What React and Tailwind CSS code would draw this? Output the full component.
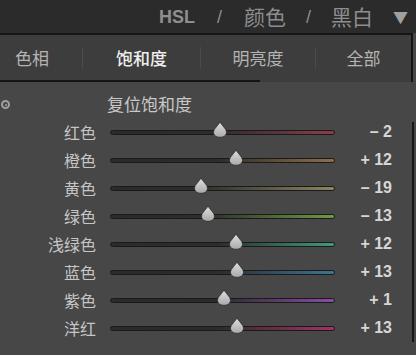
import React from 'react';

const rows = [
    { label: '红色', value: '– 2', pos: 49, track: 'bg-[linear-gradient(to_right,#2b2b2b_0%,#2e2b2c_48%,#8a3c4c_100%)]' },
    { label: '橙色', value: '+ 12', pos: 56, track: 'bg-[linear-gradient(to_right,#2b2b2b_0%,#2e2c2a_48%,#8c7048_100%)]' },
    { label: '黄色', value: '– 19', pos: 40.5, track: 'bg-[linear-gradient(to_right,#2b2b2b_0%,#2e2d2a_40%,#8a8660_100%)]' },
    { label: '绿色', value: '– 13', pos: 43.5, track: 'bg-[linear-gradient(to_right,#2b2b2b_0%,#2b2e2a_42%,#6c9c42_100%)]' },
    { label: '浅绿色', value: '+ 12', pos: 56, track: 'bg-[linear-gradient(to_right,#2b2b2b_0%,#2a2e2d_48%,#3f9a7e_100%)]' },
    { label: '蓝色', value: '+ 13', pos: 56.5, track: 'bg-[linear-gradient(to_right,#2b2b2b_0%,#2a2c2e_48%,#3c7494_100%)]' },
    { label: '紫色', value: '+ 1', pos: 50.5, track: 'bg-[linear-gradient(to_right,#2b2b2b_0%,#2d2a2e_48%,#8a4ca4_100%)]' },
    { label: '洋红', value: '+ 13', pos: 56.5, track: 'bg-[linear-gradient(to_right,#2b2b2b_0%,#2e2a2c_48%,#a23462_100%)]' },
];

const Thumb = () => (
    <svg width="14" height="17" viewBox="0 0 14 17" className="block">
        <defs>
            <linearGradient id="thumbFill" x1="0" y1="0" x2="0" y2="1">
                <stop offset="0" stopColor="#e2e2e2" />
                <stop offset="1" stopColor="#a8a8a8" />
            </linearGradient>
        </defs>
        <path
            d="M7 0.5 C8.2 4.3 13.5 7.5 13.5 11.3 C13.5 14.3 10.6 16.3 7 16.3 C3.4 16.3 0.5 14.3 0.5 11.3 C0.5 7.5 5.8 4.3 7 0.5 Z"
            fill="url(#thumbFill)"
            stroke="#2a2a2a"
            strokeWidth="0.8"
        />
    </svg>
);

const Separator = () => <div className="w-px h-[22px] bg-[#4c4c4c]" />;

export default function App() {
    return (
        <div className="w-[416px] h-[355px] overflow-hidden bg-[#474747] font-['Noto_Sans_CJK_SC','Liberation_Sans',sans-serif]">
            {/* module header */}
            <div className="h-[33px] bg-[#2b2b2b] flex items-center justify-end pr-[8px] text-[#8e8e8e] text-[21px] leading-none">
                <span className="font-['Liberation_Sans',sans-serif] font-bold text-[18px]">HSL</span>
                <span className="mx-[22px] text-[18px] font-['Liberation_Sans',sans-serif]">/</span>
                <span>颜色</span>
                <span className="mx-[20px] text-[18px] font-['Liberation_Sans',sans-serif]">/</span>
                <span>黑白</span>
                <span className="ml-[20px] text-[15px] text-[#a0a0a0]">▼</span>
            </div>

            {/* tabs */}
            <div className="h-[49px] bg-[#3d3d3d] border-t-2 border-r-2 border-[#151515] mr-[3px] relative">
                <div className="h-[46px] flex items-center text-[17px] text-[#b4b4b4]">
                    <div className="w-[82px] pl-[15px]">色相</div>
                    <Separator />
                    <div className="w-[117px] text-center text-[#eeeeee] font-medium">饱和度</div>
                    <Separator />
                    <div className="w-[114px] text-center">明亮度</div>
                    <Separator />
                    <div className="flex-1 text-center">全部</div>
                </div>
                <div className="absolute left-0 bottom-0 w-[260px] h-[2px] bg-[#151515]" />
            </div>

            {/* content */}
            <div className="relative pt-[8px] pr-[3px]">
                <div className="absolute right-[2px] top-[40px] bottom-0 w-[2px] bg-[#171717]" />
                <div className="h-[28px] flex items-center relative">
                    <div className="absolute left-[1px] top-[10px] w-[9px] h-[9px] rounded-full border-2 border-[#a0a0a0] flex items-center justify-center">
                        <div className="w-[2px] h-[2px] rounded-full bg-[#a0a0a0]" />
                    </div>
                    <span className="ml-[107px] text-[17px] text-[#c8c8c8]">复位饱和度</span>
                </div>
                {rows.map((r) => (
                    <div key={r.label} className="h-[28px] flex items-center">
                        <div className="w-[96px] text-right text-[16px] text-[#c6c6c6]">{r.label}</div>
                        <div className="ml-[14px] w-[225px] relative">
                            <div className={`h-[5px] rounded-full border border-[#1a1a1a] ${r.track}`} />
                            <div className="absolute top-[-9px] -translate-x-1/2" style={{ left: `${r.pos}%` }}>
                                <Thumb />
                            </div>
                        </div>
                        <div className="w-[57px] text-right text-[16px] font-bold text-[#d6d6d6] font-['Liberation_Sans',sans-serif]">{r.value}</div>
                    </div>
                ))}
            </div>
        </div>
    );
}
